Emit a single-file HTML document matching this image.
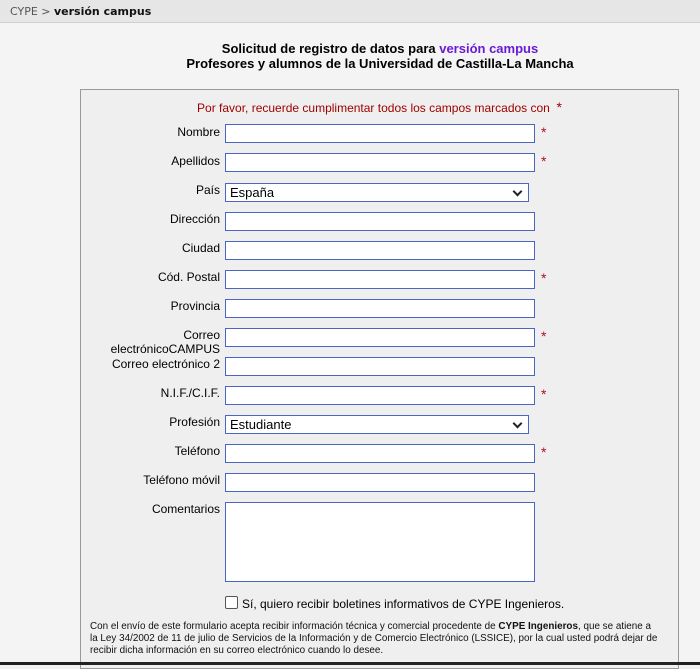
<!DOCTYPE html>
<html><head><meta charset="utf-8"><style>
*{box-sizing:border-box}
body{margin:0;width:700px;height:665px;background:#f4f4f4;font-family:"Liberation Sans",Arial,sans-serif;position:relative;overflow:hidden;color:#000}
.top{position:absolute;left:0;top:0;width:700px;height:23px;background:#e6e6e6;border-bottom:1px solid #cfcfcf;font-size:11px;line-height:23px;padding-left:10px;color:#555;font-family:"DejaVu Sans",sans-serif}
.top b{color:#111}
.title{position:absolute;left:80px;width:600px;top:41px;text-align:center;font-weight:bold;font-size:13px;line-height:15px}
.title span{color:#6a1ad6}
.box{position:absolute;left:80px;top:89px;width:599px;height:580px;background:#efefef;border:1px solid #999}
.note{position:absolute;left:80px;width:599px;top:99px;text-align:center;color:#a00000;font-size:12px}
.note i{font-style:normal;font-size:14px}
.l{position:absolute;right:480px;font-size:12px;text-align:right;line-height:14px}
.i{position:absolute;left:225px;width:310px;height:19px;background:#fff;border:1px solid #4a66c4}
.s{position:absolute;left:225px;width:304px;height:19px;background:#fff;border:1px solid #4a66c4;font-size:13px;line-height:17px;padding-left:4px}
.s:after{content:"";position:absolute;right:7px;top:4px;width:5px;height:5px;border-right:2px solid #222;border-bottom:2px solid #222;transform:rotate(45deg)}
.st{position:absolute;left:541px;color:#b01020;font-size:14px}
.foot{position:absolute;left:90px;top:621px;width:600px;font-size:9.9px;line-height:12px;color:#111;white-space:nowrap}
.bot{position:absolute;left:0;top:662px;width:700px;height:3px;background:#222}
</style></head><body>
<div class="top">CYPE &gt; <b>versión campus</b></div>
<div class="title">Solicitud de registro de datos para <span>versión campus</span><br>Profesores y alumnos de la Universidad de Castilla-La Mancha</div>
<div class="box"></div>
<div class="note">Por favor, recuerde cumplimentar todos los campos marcados con &nbsp;<i>*</i></div>

<div class="l" style="top:125px">Nombre</div><div class="i" style="top:124px"></div><div class="st" style="top:124px">*</div>
<div class="l" style="top:154px">Apellidos</div><div class="i" style="top:153px"></div><div class="st" style="top:153px">*</div>
<div class="l" style="top:183px">País</div><div class="s" style="top:183px">España</div>
<div class="l" style="top:212px">Dirección</div><div class="i" style="top:212px"></div>
<div class="l" style="top:241px">Ciudad</div><div class="i" style="top:241px"></div>
<div class="l" style="top:270px">Cód. Postal</div><div class="i" style="top:270px"></div><div class="st" style="top:270px">*</div>
<div class="l" style="top:299px">Provincia</div><div class="i" style="top:299px"></div>
<div class="l" style="top:328px">Correo<br>electrónicoCAMPUS</div><div class="i" style="top:328px"></div><div class="st" style="top:328px">*</div>
<div class="l" style="top:357px">Correo electrónico 2</div><div class="i" style="top:357px"></div>
<div class="l" style="top:386px">N.I.F./C.I.F.</div><div class="i" style="top:386px"></div><div class="st" style="top:386px">*</div>
<div class="l" style="top:415px">Profesión</div><div class="s" style="top:415px">Estudiante</div>
<div class="l" style="top:444px">Teléfono</div><div class="i" style="top:444px"></div><div class="st" style="top:444px">*</div>
<div class="l" style="top:473px">Teléfono móvil</div><div class="i" style="top:473px"></div>
<div class="l" style="top:502px">Comentarios</div><div class="i" style="top:502px;height:80px"></div>

<div style="position:absolute;left:225px;top:596px;width:13px;height:13px;border:1px solid #555;border-radius:2px;background:#fff"></div>
<div style="position:absolute;left:242px;top:597px;font-size:12px">Sí, quiero recibir boletines informativos de CYPE Ingenieros.</div>
<div class="foot">Con el envío de este formulario acepta recibir información técnica y comercial procedente de <b>CYPE Ingenieros</b>, que se atiene a<br>la Ley 34/2002 de 11 de julio de Servicios de la Información y de Comercio Electrónico (LSSICE), por la cual usted podrá dejar de<br>recibir dicha información en su correo electrónico cuando lo desee.</div>
<div class="bot"></div>
</body></html>
